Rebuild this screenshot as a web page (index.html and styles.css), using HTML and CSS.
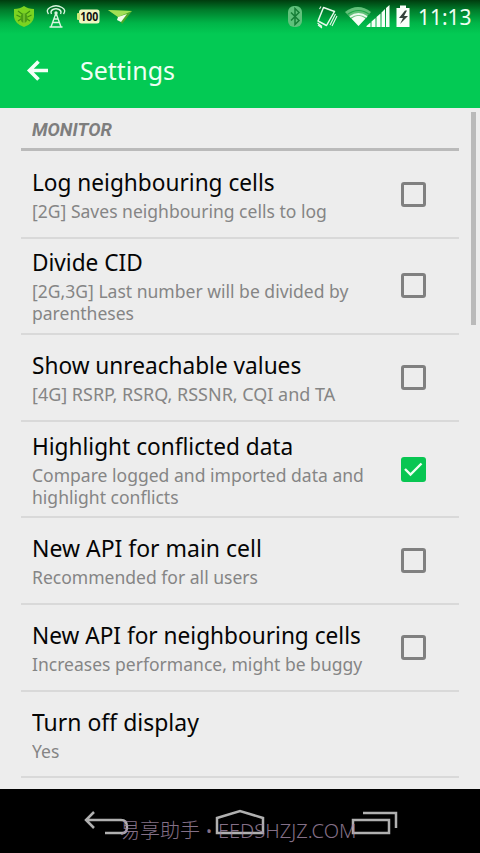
FILE: index.html
```html
<!DOCTYPE html>
<html lang="en">
<head>
<meta charset="utf-8">
<title>Settings</title>
<link rel="stylesheet" href="styles.css">
</head>
<body>
<div class="screen">
  <header class="header">
    <div class="status">
      <svg class="status-icons" width="140" height="34" viewBox="0 0 140 34">
        <path d="M14 9Q20 9 24 6Q28 9 34 9V17Q33 24 24 27Q15 24 14 17Z" fill="#7bd321"/>
        <g fill="none" stroke="#3f9212" stroke-width="1.200"><path d="M18 11l4 3M30 11l-4 3M16.500 15l4 2M31.500 15l-4 2M18 21l3-2M30 21l-3-2"/></g><ellipse cx="24" cy="18" rx="3.500" ry="5" fill="#4a9c16"/><path d="M24 13V23" stroke="#8fda3c"/>
        <g fill="none" stroke="#d9f5df" stroke-width="1.400"><path d="M48.500 14Q45.500 10 50 7.500Q56 4 62 7.500Q66.500 10 63.500 14M51.500 14Q50 11 53 9.500Q56 8 59 9.500Q62 11 60.500 14M56 13L51 27M56 13L61 27M54 19H58M53 22.500H59M49.500 27H62.500"/></g><circle cx="56" cy="13" r="1.700" fill="#d9f5df"/>
        <rect x="79" y="9.500" width="20.500" height="14" rx="2.500" fill="#f1f6c2"/><rect x="77" y="13" width="3" height="7" rx="1" fill="#cce878"/>
        <text x="89.200" y="21" text-anchor="middle" class="battery-count" textLength="18" lengthAdjust="spacingAndGlyphs">100</text>
        <path d="M108 10L132 11L122 24L118 17Z" fill="#4caa28"/><path d="M108 10L132 11L118 17Z" fill="#a2df55"/><path d="M118 17L127 14L121 22L117 20Z" fill="#f3fbe8"/>
      </svg>
      <div class="status-right">
        <svg width="132" height="34" viewBox="0 0 132 34">
          <rect x="8" y="6" width="14" height="21" rx="6" fill="#5fc17b"/><path d="M11 12.500L19 20.500L15 24.500V8.500L19 12.500L11 20.500" fill="none" stroke="#167e37" stroke-width="1.500"/>
          <g fill="none" stroke="#e9f9ed" stroke-width="1.500" stroke-linejoin="round"><path d="M43.500 7.500L54.500 11.500L46.500 25.500L38 21Z"/><path stroke-width="1.100" d="M41 6.500L39.500 9M55.500 14L50 25M57 16L52 26M37.500 23L42 26.500M38 25L42 28"/></g>
          <path d="M65 12Q78 2 91 12L78.500 26Z" fill="#63c17a"/><path d="M71.500 18.500Q78.500 13 85.500 18.500L78.500 26Z" fill="#f4fff6"/><path d="M67.500 14.500Q78.500 6.500 89.500 14.500" fill="none" stroke="#20a74a" stroke-width="1.200"/><path d="M70 17Q78.500 11 87 17" fill="none" stroke="#e9faed" stroke-width="1.800"/>
          <path d="M86.500 27V26L90.500 22.500V27M91.500 27V21.500L95.500 18V27M96.500 27V17L100.500 13.500V27M101.500 27V12.500L105 9V27M106 27V8L109.500 5V27" fill="#f5fff7"/>
          <path d="M116.500 8H120V5.500H126V8H129.500V27H116.500Z" fill="#fafffa"/><path d="M125 10.500L119 18H123L120 24L128 16H124L127 10.500Z" fill="#34423b"/>
        </svg>
        <span class="clock">11:13</span>
      </div>
    </div>
    <div class="appbar">
      <svg class="back" width="22" height="22" viewBox="0 0 22 22"><path d="M12.500 1.500L3.500 10.500L12.500 19.500M3.500 10.500H22" fill="none" stroke="#f4fff7" stroke-width="3.600"/></svg>
      <h1>Settings</h1>
    </div>
  </header>
  <main class="content">
    <h2><span>MONITOR</span></h2>
    <ul class="list">
      <li class="row"><div class="copy"><h3>Log neighbouring cells</h3><p>[2G] Saves neighbouring cells to log</p></div><i class="box"></i></li>
      <li class="row tall"><div class="copy"><h3>Divide CID</h3><p>[2G,3G] Last number will be divided by<br>parentheses</p></div><i class="box"></i></li>
      <li class="row"><div class="copy"><h3>Show unreachable values</h3><p class="acronyms">[4G] RSRP, RSRQ, RSSNR, CQI and TA</p></div><i class="box"></i></li>
      <li class="row tall"><div class="copy"><h3>Highlight conflicted data</h3><p>Compare logged and imported data and<br>highlight conflicts</p></div><i class="box checked"><svg width="24" height="24" viewBox="0 0 24 24"><path d="M4 12L9.500 17.500L20.500 6.500" fill="none" stroke="#effff2" stroke-width="2.400"/></svg></i></li>
      <li class="row"><div class="copy"><h3 class="wide">New API for main cell</h3><p>Recommended for all users</p></div><i class="box"></i></li>
      <li class="row"><div class="copy"><h3>New API for neighbouring cells</h3><p>Increases performance, might be buggy</p></div><i class="box"></i></li>
      <li class="row"><div class="copy"><h3 class="wide">Turn off display</h3><p>Yes</p></div></li>
    </ul>
    <div class="scrollbar"></div>
  </main>
  <nav class="nav">
    <svg width="480" height="64" viewBox="0 0 480 64" fill="none" stroke="#b0b0b0" stroke-width="2.500"><path d="M94 23L86 31L94 39M86 31H121Q127 31 127 38T121 44H105"/><path d="M217 44V29L240 22L263 29V44Z"/><path d="M353 31H389V44H353ZM363 24H396V39"/></svg>
    <div class="watermark">易享助手 • EEDSHZJZ.COM</div>
  </nav>
</div>
</body>
</html>
```

FILE: styles.css
```css
* { box-sizing: border-box; margin: 0; padding: 0; }
body { width: 480px; height: 853px; overflow: hidden; font-family: "Noto Sans", sans-serif; }
.screen { display: flex; flex-direction: column; width: 480px; height: 853px; background: #ededed; }
.header { height: 108px; background: linear-gradient(#003c0e 0, #007c2b 10px, #00b548 23px, #03ca54 34px); }
.status { display: flex; justify-content: space-between; height: 34px; }
.status-right { display: flex; }
.battery-count { font: bold 12.5px "Noto Sans", sans-serif; fill: #111; }
.clock { width: 68px; padding-left: 6px; color: #effff2; font-size: 22px; line-height: 33px; white-space: nowrap; transform: scaleX(.95); transform-origin: 6px 50%; }
.appbar { display: flex; align-items: center; height: 73px; padding-left: 26px; }
.appbar h1 { margin: -2px 0 0 32px; color: #effff4; font-size: 26px; font-weight: 400; line-height: 34px; transform: scaleX(.96); transform-origin: left; }
.content { position: relative; height: 681px; padding: 0 21px; overflow: hidden; }
h2 { height: 43px; padding-left: 11px; border-bottom: 3px solid #bababa; color: #7e7e7e; font: italic 700 18px/44px Roboto, sans-serif; }
h2 span { display: inline-block; transform: scaleX(1.02); transform-origin: left; }
.list { padding-top: 1px; list-style: none; }
.row { display: flex; align-items: center; justify-content: space-between; height: 86.700px; padding: 0 33px 0 11px; border-bottom: 2px solid #d9d9d9; }
.tall { height: 96.500px; }
.copy { white-space: nowrap; }
h3 { margin-top: -1px; color: #050505; font-size: 24px; font-weight: 400; line-height: 32px; transform: scaleX(.943); transform-origin: left; }
.wide { transform: scaleX(.957); }
p { margin-top: 2px; color: #858585; font-size: 18px; line-height: 22px; transform: scaleX(.974); transform-origin: left; }
.acronyms { transform: scaleX(.998); }
.box { flex: none; width: 25px; height: 25px; border: 3px solid #808080; border-radius: 3px; }
.checked { border: 0; background: #08c652; }
.checked svg { display: block; }
.scrollbar { position: absolute; top: 4px; right: 4px; width: 5px; height: 213px; background: #bababa; }
.nav { position: relative; height: 64px; background: #000; }
.nav svg { display: block; }
.watermark { position: absolute; left: 120px; top: 30px; color: #a58ca9; opacity: .8; font: 300 20px/24px "Noto Sans", "Noto Sans CJK SC", sans-serif; white-space: nowrap; }
```
